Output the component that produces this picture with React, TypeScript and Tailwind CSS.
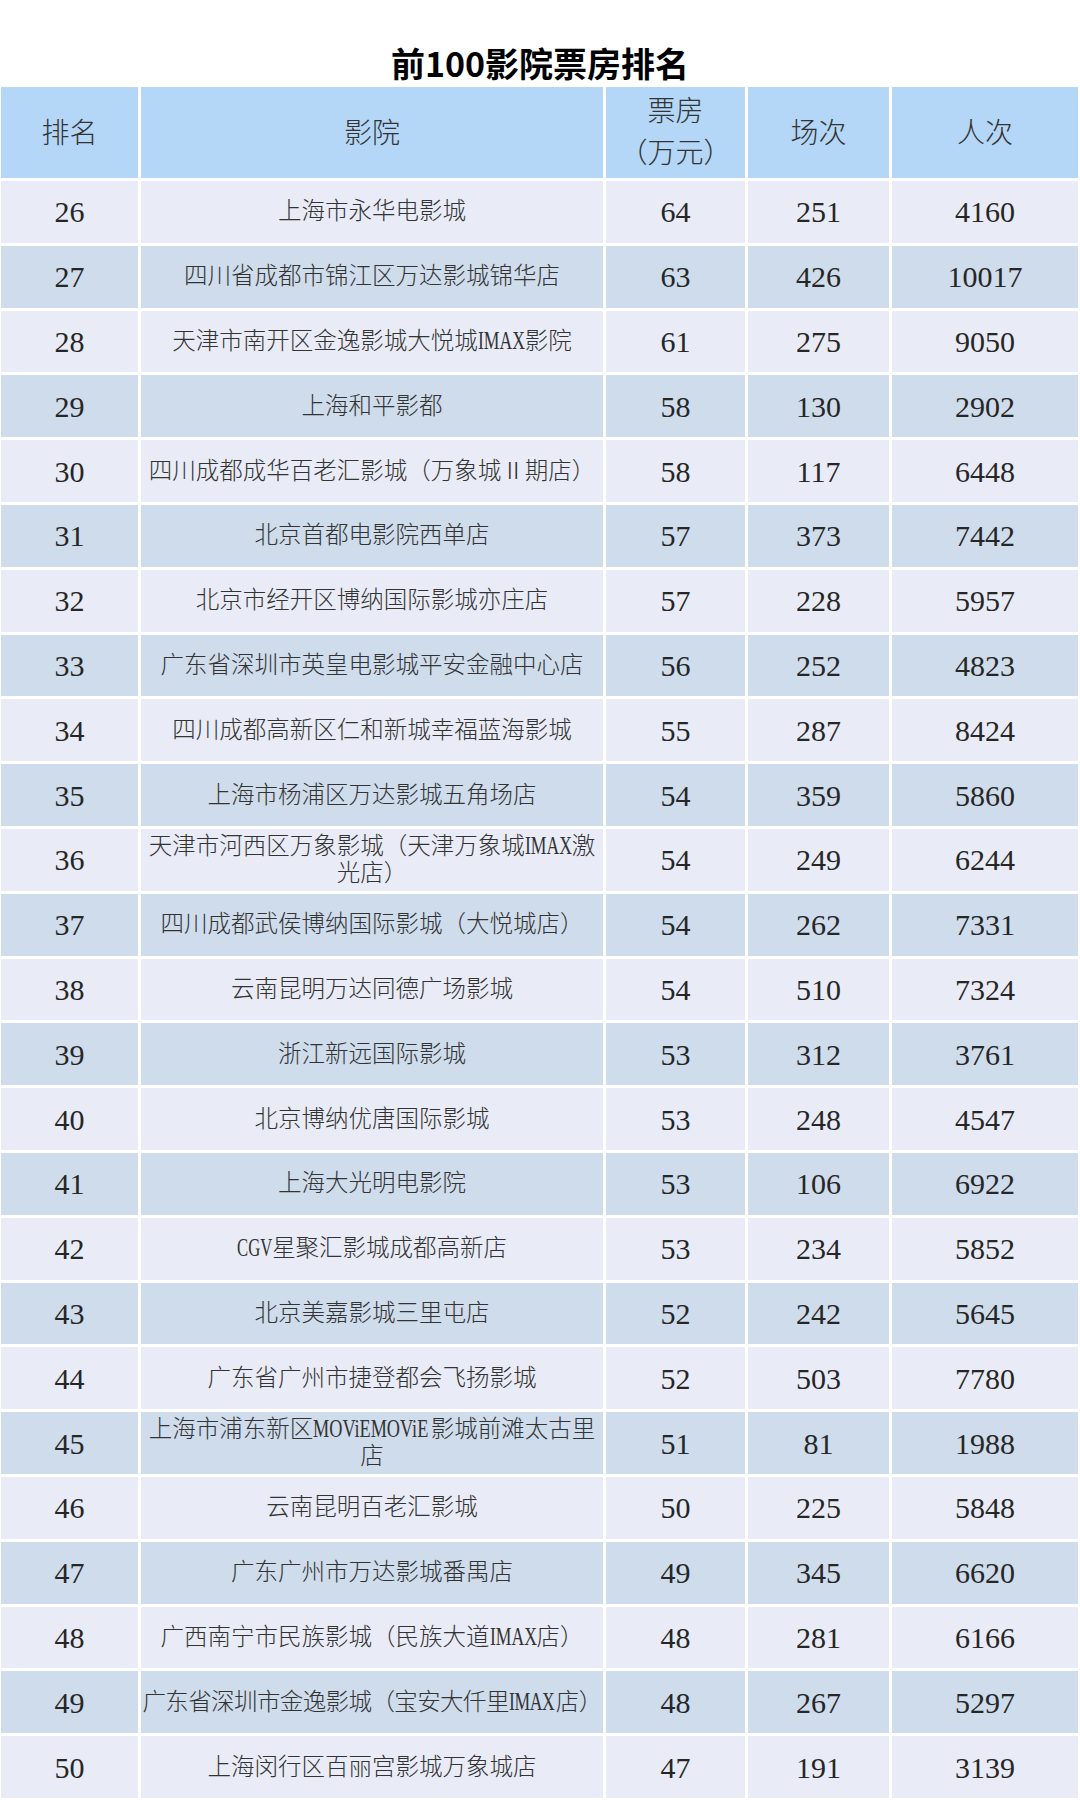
import React from 'react';

type Row = { rank: number; name: string; box: number; shows: number; people: number };

// '|' marks where the reference wraps the cinema name
const rows: Row[] = [
  { rank: 26, name: '上海市永华电影城', box: 64, shows: 251, people: 4160 },
  { rank: 27, name: '四川省成都市锦江区万达影城锦华店', box: 63, shows: 426, people: 10017 },
  { rank: 28, name: '天津市南开区金逸影城大悦城IMAX影院', box: 61, shows: 275, people: 9050 },
  { rank: 29, name: '上海和平影都', box: 58, shows: 130, people: 2902 },
  { rank: 30, name: '四川成都成华百老汇影城（万象城Ⅱ期店）', box: 58, shows: 117, people: 6448 },
  { rank: 31, name: '北京首都电影院西单店', box: 57, shows: 373, people: 7442 },
  { rank: 32, name: '北京市经开区博纳国际影城亦庄店', box: 57, shows: 228, people: 5957 },
  { rank: 33, name: '广东省深圳市英皇电影城平安金融中心店', box: 56, shows: 252, people: 4823 },
  { rank: 34, name: '四川成都高新区仁和新城幸福蓝海影城', box: 55, shows: 287, people: 8424 },
  { rank: 35, name: '上海市杨浦区万达影城五角场店', box: 54, shows: 359, people: 5860 },
  { rank: 36, name: '天津市河西区万象影城（天津万象城IMAX激|光店）', box: 54, shows: 249, people: 6244 },
  { rank: 37, name: '四川成都武侯博纳国际影城（大悦城店）', box: 54, shows: 262, people: 7331 },
  { rank: 38, name: '云南昆明万达同德广场影城', box: 54, shows: 510, people: 7324 },
  { rank: 39, name: '浙江新远国际影城', box: 53, shows: 312, people: 3761 },
  { rank: 40, name: '北京博纳优唐国际影城', box: 53, shows: 248, people: 4547 },
  { rank: 41, name: '上海大光明电影院', box: 53, shows: 106, people: 6922 },
  { rank: 42, name: 'CGV星聚汇影城成都高新店', box: 53, shows: 234, people: 5852 },
  { rank: 43, name: '北京美嘉影城三里屯店', box: 52, shows: 242, people: 5645 },
  { rank: 44, name: '广东省广州市捷登都会飞扬影城', box: 52, shows: 503, people: 7780 },
  { rank: 45, name: '上海市浦东新区MOViEMOViE影城前滩太古里|店', box: 51, shows: 81, people: 1988 },
  { rank: 46, name: '云南昆明百老汇影城', box: 50, shows: 225, people: 5848 },
  { rank: 47, name: '广东广州市万达影城番禺店', box: 49, shows: 345, people: 6620 },
  { rank: 48, name: '广西南宁市民族影城（民族大道IMAX店）', box: 48, shows: 281, people: 6166 },
  { rank: 49, name: '广东省深圳市金逸影城（宝安大仟里IMAX店）', box: 48, shows: 267, people: 5297 },
  { rank: 50, name: '上海闵行区百丽宫影城万象城店', box: 47, shows: 191, people: 3139 },
];

// Liberation Serif advance widths, used to squeeze latin runs to half-width cells
const ADV: Record<string, number> = {
  I: 0.333, M: 0.889, A: 0.722, X: 0.722, O: 0.722, V: 0.722, i: 0.278, E: 0.611, C: 0.667, G: 0.722,
};

function Latin({ text }: { text: string }) {
  const w = text.length * 11.75;
  const natural = [...text].reduce((s, c) => s + (ADV[c] ?? 0.5) * 25, 0);
  return (
    <span className="inline-block whitespace-nowrap" style={{ width: w }}>
      <span
        className="inline-block origin-left font-['Liberation_Serif'] text-[25px] leading-none"
        style={{ transform: `scaleX(${w / natural})` }}
      >
        {text}
      </span>
    </span>
  );
}

function Name({ text, tight }: { text: string; tight: boolean }) {
  const lines = text.split('|');
  return (
    <div className={`flex flex-col items-center leading-[27px] ${tight ? 'tracking-[-0.6px]' : ''}`}>
      {lines.map((line, i) => (
        <span key={i} className="whitespace-nowrap">
          {line.split(/([A-Za-z]+)/).map((part, j) =>
            /^[A-Za-z]+$/.test(part) ? <Latin key={j} text={part} /> : <span key={j}>{part}</span>
          )}
        </span>
      ))}
    </div>
  );
}

const cols = 'grid grid-cols-[137px_462px_139px_141px_186px] gap-x-[3px]';
const num = "flex items-center justify-center font-['Liberation_Serif'] text-[30px] text-[#262626]";

export default function App() {
  return (
    <div className="w-[1080px] h-[1800px] overflow-hidden bg-white font-['Liberation_Serif','Noto_Sans_CJK_SC',serif] text-[#333]">
      <h1 className="pt-[46px] pb-[7px] text-center font-['Noto_Sans_CJK_SC',sans-serif] text-[34px] leading-[34px] font-bold text-black">
        前100影院票房排名
      </h1>

      <div className="flex flex-col gap-y-[3px] pl-[1px]">
        <div className={`${cols} h-[91px] text-[28px] font-light`}>
          <div className="flex items-center justify-center bg-[#b4d6f7] pt-[3px]">排名</div>
          <div className="flex items-center justify-center bg-[#b4d6f7] pt-[3px]">影院</div>
          <div className="flex flex-col items-center justify-center bg-[#b4d6f7] leading-[42px]">
            <span>票房</span>
            <span>（万元）</span>
          </div>
          <div className="flex items-center justify-center bg-[#b4d6f7] pt-[3px]">场次</div>
          <div className="flex items-center justify-center bg-[#b4d6f7] pt-[3px]">人次</div>
        </div>

        {rows.map((r) => {
          const bg = r.rank % 2 === 0 ? 'bg-[#e9ecf6]' : 'bg-[#cfdcec]';
          return (
            <div key={r.rank} className={`${cols} h-[61.8px]`}>
              <div className={`${num} ${bg}`}>{r.rank}</div>
              <div className={`flex items-center justify-center overflow-hidden text-[23.5px] font-light ${bg}`}>
                <Name text={r.name} tight={r.rank === 49} />
              </div>
              <div className={`${num} ${bg}`}>{r.box}</div>
              <div className={`${num} ${bg}`}>{r.shows}</div>
              <div className={`${num} ${bg}`}>{r.people}</div>
            </div>
          );
        })}
      </div>
    </div>
  );
}
